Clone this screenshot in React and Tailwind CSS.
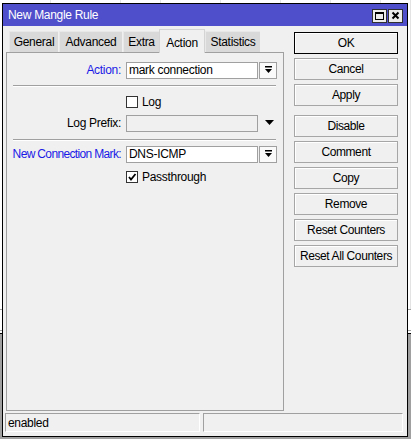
import React from 'react';

const font = { fontFamily: '"Liberation Sans", Arial, sans-serif' };

const tabs = [
  { label: 'General', w: 'w-[49px] mr-[1px]' },
  { label: 'Advanced', w: 'w-[63px] mr-[1px]' },
  { label: 'Extra', w: 'w-[36px]' },
  { label: 'Action', w: 'w-[46px]', active: true },
  { label: 'Statistics', w: 'w-[55px]' },
];

const DropIcon = () => (
  <svg width="9" height="8" viewBox="0 0 9 8">
    <rect x="1" y="0" width="7" height="1.5" fill="#000" />
    <polygon points="1,3 8,3 4.5,7" fill="#000" />
  </svg>
);

const Check = () => (
  <svg width="10" height="10" viewBox="0 0 10 10">
    <path d="M2 5 L4 7.5 L8.5 2" stroke="#000" strokeWidth="1.8" fill="none" />
  </svg>
);

const Btn = ({ children, primary }) => (
  <div
    className={`h-[22px] flex items-center justify-center text-[12px] tracking-[-0.4px] whitespace-nowrap text-black bg-[#f0f0f0] border ${
      primary ? 'border-black' : 'border-[#a6a6a6]'
    } shadow-[inset_1px_1px_0_#ffffff]`}
  >
    {children}
  </div>
);

const Field = ({ value }) => (
  <div className="flex">
    <div className="w-[132px] h-[17px] bg-white border border-[#a0a0a0] pl-[2px] flex items-center text-[12px] text-black tracking-[-0.3px]">
      {value}
    </div>
    <div className="ml-[1px] w-[18px] h-[17px] bg-[#fafafa] border border-[#a0a0a0] flex items-center justify-center">
      <DropIcon />
    </div>
  </div>
);

const Sep = () => <div className="ml-[6px] mr-[7px] border-t border-[#a0a0a0] border-b border-b-white" />;

export default function App() {
  const cells = [51, 70, 40, 60, 60, 50, 50, 30];
  return (
    <div className="relative w-[411px] h-[439px] overflow-hidden bg-white flex flex-col" style={font}>
      {/* desktop behind */}
      <div className="h-[309px] flex">
        {cells.map((w, i) => (
          <div key={i} style={{ width: w }} className="h-full border-r border-[#e3e3e3]" />
        ))}
      </div>
      <div className="h-px bg-[#a0a0a0]" />
      <div className="h-[20px] bg-white" />
      <div className="h-px bg-[#a0a0a0]" />
      <div className="h-[2px] bg-white" />
      <div className="h-px bg-black" />
      <div className="flex-1 bg-[#a0a0a0]" />

      {/* window */}
      <div className="absolute left-[2px] top-[3px] w-[406px] h-[434px] border border-black bg-[#f0f0f0] flex flex-col">
        <div className="h-[22px] bg-[#4f4fcb] flex items-center justify-between pl-[5px] pr-[4px]">
          <span className="text-white text-[12px] tracking-[-0.3px]">New Mangle Rule</span>
          <div className="flex gap-[1px] mt-[1px]">
            <div className="w-[15px] h-[14px] bg-[#ececec] border border-[#303030] flex items-center justify-center">
              <div className="w-[9px] h-[8px] border border-black border-t-2" />
            </div>
            <div className="w-[15px] h-[14px] bg-[#ececec] border border-[#303030] flex items-center justify-center">
              <svg width="9" height="9" viewBox="0 0 9 9">
                <path d="M1.5 1.5 L7.5 7.5 M7.5 1.5 L1.5 7.5" stroke="#000" strokeWidth="2" />
              </svg>
            </div>
          </div>
        </div>

        <div className="flex-1 flex flex-col">
          <div className="h-[385px] flex">
            {/* left: tabs + panel */}
            <div className="ml-[3px] w-[278px] flex flex-col">
              <div className="h-[26px] flex items-end pl-[3px]">
                {tabs.map((t) =>
                  t.active ? (
                    <div
                      key={t.label}
                      className={`${t.w} h-[24px] -mb-px z-10 bg-[#f0f0f0] border-t border-l border-r border-[#d4d4d4] flex items-start justify-center pt-[4px] text-[12px] tracking-[-0.3px] text-black`}
                    >
                      {t.label}
                    </div>
                  ) : (
                    <div
                      key={t.label}
                      className={`${t.w} h-[21px] bg-[#d9d9d9] border-l border-t border-[#e8e8e8] flex items-center justify-center text-[12px] text-black tracking-[-0.3px]`}
                    >
                      {t.label}
                    </div>
                  )
                )}
              </div>
              <div className="flex-1 border border-[#a0a0a0] pt-[8px] text-[12px] tracking-[-0.3px]">
                <div className="flex items-center">
                  <div className="w-[114px] text-right text-[#1a1ae6] whitespace-nowrap">Action:</div>
                  <div className="ml-[5px]">
                    <Field value="mark connection" />
                  </div>
                </div>
                <div className="mt-[6px]">
                  <Sep />
                </div>
                <div className="mt-[9px] ml-[119px] flex items-center h-[12px]">
                  <div className="w-[12px] h-[12px] bg-white border border-[#333]" />
                  <span className="ml-[4px] text-black">Log</span>
                </div>
                <div className="mt-[6px] flex items-center">
                  <div className="w-[114px] text-right text-black whitespace-nowrap">Log Prefix:</div>
                  <div className="ml-[5px] w-[132px] h-[17px] bg-[#f0f0f0] border border-[#a0a0a0]" />
                  <svg className="ml-[7px]" width="9" height="6" viewBox="0 0 9 6">
                    <polygon points="0,0 9,0 4.5,5" fill="#000" />
                  </svg>
                </div>
                <div className="mt-[7px]">
                  <Sep />
                </div>
                <div className="mt-[4px] flex items-center">
                  <div className="w-[114px] flex justify-end text-[#1a1ae6] whitespace-nowrap tracking-[-0.65px]">New Connection Mark:</div>
                  <div className="ml-[5px]">
                    <Field value="DNS-ICMP" />
                  </div>
                </div>
                <div className="mt-[8px] ml-[119px] flex items-center h-[12px]">
                  <div className="w-[12px] h-[12px] bg-white border border-[#333] flex items-center justify-center">
                    <Check />
                  </div>
                  <span className="ml-[4px] text-black">Passthrough</span>
                </div>
              </div>
            </div>

            {/* right: buttons */}
            <div className="ml-[10px] w-[104px] pt-[6px] flex flex-col gap-[4px]">
              <Btn primary>OK</Btn>
              <Btn>Cancel</Btn>
              <Btn>Apply</Btn>
              <div className="mt-[5px] flex flex-col gap-[4px]">
                <Btn>Disable</Btn>
                <Btn>Comment</Btn>
                <Btn>Copy</Btn>
                <Btn>Remove</Btn>
                <Btn>Reset Counters</Btn>
                <Btn>Reset All Counters</Btn>
              </div>
            </div>
          </div>

          {/* status bar */}
          <div className="mt-[2px] h-[19px] flex ml-[2px] mr-[4px] gap-[3px]">
            <div className="w-[195px] h-full border-t border-l border-[#a0a0a0] border-b border-r border-b-white border-r-white pl-[2px] flex items-center text-[12px] tracking-[-0.3px] text-black">
              enabled
            </div>
            <div className="flex-1 h-full border-t border-l border-[#a0a0a0] border-b border-r border-b-white border-r-white" />
          </div>
        </div>
      </div>
    </div>
  );
}
